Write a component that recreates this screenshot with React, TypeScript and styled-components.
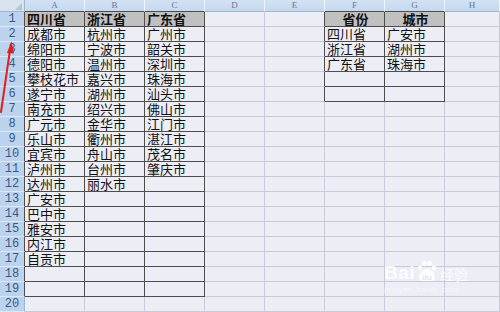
import React from "react";
import styled, { createGlobalStyle, css } from "styled-components";

const Global = createGlobalStyle`
  html, body { margin: 0; padding: 0; background: #ededf5; overflow: hidden; }
  #root { width: 500px; height: 312px; }
`;

const Frame = styled.div`
  position: relative;
  width: 500px;
  height: 312px;
  overflow: hidden;
  background: #ededf5;
`;

const Grid = styled.div`
  display: grid;
  grid-template-columns: 25px repeat(7, 60px) 1fr;
  grid-template-rows: 12px repeat(20, 15px);
  width: 500px;
`;

const Corner = styled.div`
  position: relative;
  background: #d9e3ef;
  border-right: 1px solid #9fb6cf;
  border-bottom: 1px solid #9fb6cf;
  box-sizing: border-box;
  &::after {
    content: "";
    position: absolute;
    right: 2px;
    bottom: 1px;
    width: 0;
    height: 0;
    border-left: 7px solid transparent;
    border-bottom: 7px solid #b7c2cf;
  }
`;

const ColHead = styled.div<{ $dark: boolean }>`
  box-sizing: border-box;
  background: linear-gradient(#d3e2f3, #c4d8ee);
  border-right: 1px solid #eef4fb;
  border-bottom: 1px solid ${(p) => (p.$dark ? "#4d4d4d" : "#9fb6cf")};
  font-family: "Liberation Serif", serif;
  font-size: 9px;
  line-height: 11px;
  color: #66789a;
  text-align: center;
`;

const RowHead = styled.div<{ $dark: boolean }>`
  box-sizing: border-box;
  background: #bcd3ee;
  border-bottom: 1px solid #dde8f5;
  border-right: 1px solid ${(p) => (p.$dark ? "#4d4d4d" : "#9fb6cf")};
  font-family: "Liberation Mono", monospace;
  font-size: 12px;
  line-height: 14px;
  color: #3a5985;
  text-align: center;
`;

const Cell = styled.div<{ $right: boolean; $bottom: boolean; $head: boolean; $center: boolean }>`
  box-sizing: border-box;
  padding-left: 2px;
  white-space: nowrap;
  font-family: "Noto Sans CJK SC", sans-serif;
  font-size: 13px;
  line-height: 14px;
  color: #111;
  border-right: 1px solid ${(p) => (p.$right ? "#4d4d4d" : "#c9c9d9")};
  border-bottom: 1px solid ${(p) => (p.$bottom ? "#4d4d4d" : "#c9c9d9")};
  text-align: ${(p) => (p.$center ? "center" : "left")};
  ${(p) =>
    p.$head &&
    css`
      background: #c0c0c0;
      font-weight: bold;
    `}
`;

const Arrow = styled.svg`
  position: absolute;
  left: 0;
  top: 0;
  pointer-events: none;
`;

const Watermark = styled.div`
  position: absolute;
  left: 384px;
  top: 260px;
  display: flex;
  flex-direction: column;
  align-items: flex-start;
  color: rgba(255, 255, 255, 0.85);
`;

const MarkRow = styled.div`
  display: flex;
  align-items: flex-end;
  gap: 1px;
`;

const Bai = styled.span`
  font-family: "Liberation Sans", sans-serif;
  font-weight: bold;
  font-size: 19px;
  line-height: 19px;
  letter-spacing: 0.5px;
`;

const Jingyan = styled.span`
  font-family: "Noto Sans CJK SC", sans-serif;
  font-size: 14px;
  line-height: 16px;
  margin-left: 1px;
`;

const MarkSub = styled.span`
  font-family: "Liberation Sans", sans-serif;
  font-size: 8px;
  line-height: 10px;
  margin-top: 3px;
  color: rgba(255, 255, 255, 0.55);
  letter-spacing: 0.6px;
`;

const colA = ["四川省", "成都市", "绵阳市", "德阳市", "攀枝花市", "遂宁市", "南充市", "广元市", "乐山市", "宜宾市", "泸州市", "达州市", "广安市", "巴中市", "雅安市", "内江市", "自贡市"];
const colB = ["浙江省", "杭州市", "宁波市", "温州市", "嘉兴市", "湖州市", "绍兴市", "金华市", "衢州市", "舟山市", "台州市", "丽水市"];
const colC = ["广东省", "广州市", "韶关市", "深圳市", "珠海市", "汕头市", "佛山市", "江门市", "湛江市", "茂名市", "肇庆市"];
const colF = ["省份", "四川省", "浙江省", "广东省"];
const colG = ["城市", "广安市", "湖州市", "珠海市"];

const letters = ["A", "B", "C", "D", "E", "F", "G", "H"];

function inTable(r: number, c: number) {
  if (r >= 1 && r <= 19 && c >= 1 && c <= 3) return true;
  if (r >= 1 && r <= 6 && c >= 6 && c <= 7) return true;
  return false;
}

function valueAt(r: number, c: number): string {
  const i = r - 1;
  if (c === 1) return colA[i] ?? "";
  if (c === 2) return colB[i] ?? "";
  if (c === 3) return colC[i] ?? "";
  if (c === 6) return colF[i] ?? "";
  if (c === 7) return colG[i] ?? "";
  return "";
}

function Paw() {
  return (
    <svg width="22" height="22" viewBox="0 0 22 22">
      <g fill="rgba(255,255,255,0.85)">
        <ellipse cx="4" cy="8" rx="2.2" ry="2.8" />
        <ellipse cx="8.5" cy="3.5" rx="2.2" ry="2.8" />
        <ellipse cx="13.5" cy="3.5" rx="2.2" ry="2.8" />
        <ellipse cx="18" cy="8" rx="2.2" ry="2.8" />
        <path d="M11 8.5 C7 8.5 3 14 3 17.5 C3 20.5 5.5 21.5 8 21 C9.5 20.7 10.3 20.4 11 20.4 C11.7 20.4 12.5 20.7 14 21 C16.5 21.5 19 20.5 19 17.5 C19 14 15 8.5 11 8.5 Z" />
      </g>
      <text x="11" y="19.5" textAnchor="middle" fontFamily="Liberation Sans, sans-serif" fontWeight="bold" fontSize="8" fill="#e6e6f0">
        du
      </text>
    </svg>
  );
}

export default function App() {
  const cells: React.ReactNode[] = [];
  cells.push(<Corner key="corner" />);
  for (let c = 1; c <= 8; c++) {
    cells.push(
      <ColHead key={`h${c}`} $dark={inTable(1, c)}>
        {letters[c - 1]}
      </ColHead>
    );
  }
  for (let r = 1; r <= 20; r++) {
    cells.push(
      <RowHead key={`r${r}`} $dark={inTable(r, 1)}>
        {r}
      </RowHead>
    );
    for (let c = 1; c <= 8; c++) {
      const head = r === 1 && (c <= 3 || c === 6 || c === 7);
      cells.push(
        <Cell
          key={`c${r}-${c}`}
          $right={inTable(r, c) || inTable(r, c + 1)}
          $bottom={inTable(r, c) || inTable(r + 1, c)}
          $head={head}
          $center={head && c >= 6}
        >
          {valueAt(r, c)}
        </Cell>
      );
    }
  }

  return (
    <Frame>
      <Global />
      <Grid>{cells}</Grid>
      <Arrow width="30" height="120" viewBox="0 0 30 120">
        <line x1="1" y1="112" x2="10" y2="50" stroke="#e0201e" strokeWidth="2" strokeLinecap="round" />
        <polygon points="11.5,41 7,53 14,53.5" fill="#e0201e" />
      </Arrow>
      <Watermark>
        <MarkRow>
          <Bai>Bai</Bai>
          <Paw />
          <Jingyan>经验</Jingyan>
        </MarkRow>
        <MarkSub>jingyan.baidu.com</MarkSub>
      </Watermark>
    </Frame>
  );
}
